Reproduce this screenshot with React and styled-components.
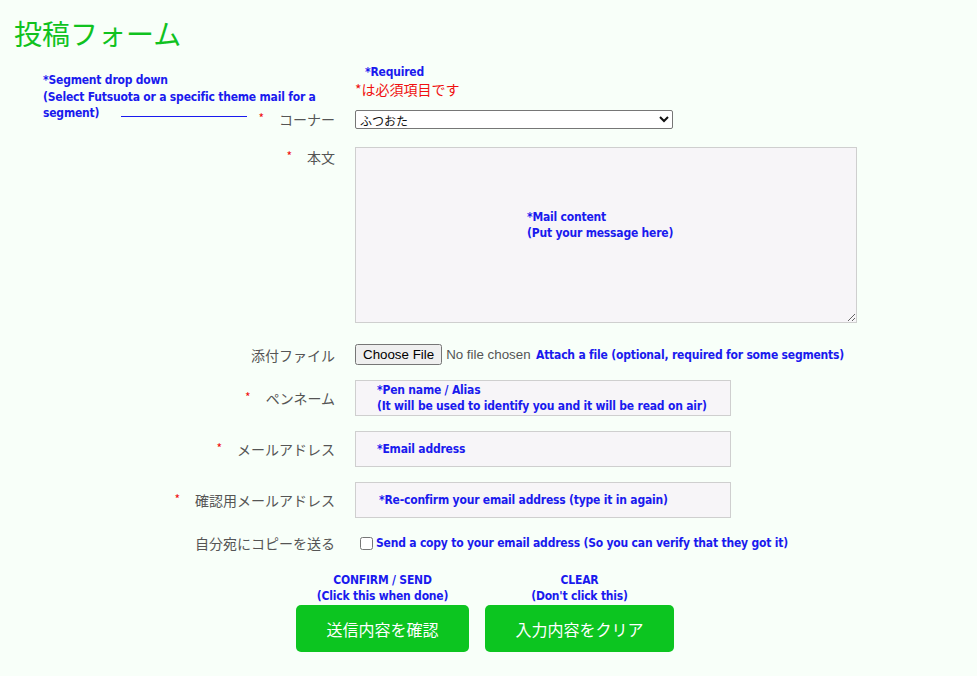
import React from 'react';
import styled, { createGlobalStyle } from 'styled-components';

const GlobalStyle = createGlobalStyle`
  html, body {
    margin: 0;
    background: #f8fff9;
  }
  body {
    font-family: "Noto Sans CJK JP", "Liberation Sans", sans-serif;
    color: #555;
  }
`;

const App = () => {
  return (
    <Page>
      <GlobalStyle />
      <Title>投稿フォーム</Title>

      <Form onSubmit={(e) => e.preventDefault()}>
        <SideNote>
          <NoteLine>*Segment drop down</NoteLine>
          <NoteLine>(Select Futsuota or a specific theme mail for a</NoteLine>
          <NoteLine>
            segment)
            <Leader />
          </NoteLine>
        </SideNote>

        <Row $mt={12}>
          <span />
          <Field>
            <Hint $indent={10}>*Required</Hint>
            <RequiredNote>*は必須項目です</RequiredNote>
          </Field>
        </Row>

        <Row $mt={11}>
          <Label required>コーナー</Label>
          <Field>
            <Select defaultValue="futsuota">
              <option value="futsuota">ふつおた</option>
            </Select>
          </Field>
        </Row>

        <Row $mt={18} $top>
          <Label required>本文</Label>
          <Field>
            <Box>
              <Textarea />
              <Overlay $left={172} $top={62}>
                *Mail content
                <br />
                (Put your message here)
              </Overlay>
            </Box>
          </Field>
        </Row>

        <Row $mt={21}>
          <Label>添付ファイル</Label>
          <Field $inline>
            <FileInput type="file" />
            <Hint>Attach a file (optional, required for some segments)</Hint>
          </Field>
        </Row>

        <Row $mt={15}>
          <Label required>ペンネーム</Label>
          <Field>
            <Box>
              <TextInput type="text" />
              <Overlay $left={22} $center>
                *Pen name / Alias
                <br />
                (It will be used to identify you and it will be read on air)
              </Overlay>
            </Box>
          </Field>
        </Row>

        <Row $mt={15}>
          <Label required>メールアドレス</Label>
          <Field>
            <Box>
              <TextInput type="email" />
              <Overlay $left={22} $center>
                *Email address
              </Overlay>
            </Box>
          </Field>
        </Row>

        <Row $mt={15}>
          <Label required>確認用メールアドレス</Label>
          <Field>
            <Box>
              <TextInput type="email" />
              <Overlay $left={24} $center>
                *Re-confirm your email address (type it in again)
              </Overlay>
            </Box>
          </Field>
        </Row>

        <Row $mt={15}>
          <Label>自分宛にコピーを送る</Label>
          <Field $inline>
            <Checkbox type="checkbox" id="copy" />
            <Hint as="label" htmlFor="copy">
              Send a copy to your email address (So you can verify that they
              got it)
            </Hint>
          </Field>
        </Row>

        <Buttons>
          <ButtonCol>
            <Hint $center>
              CONFIRM / SEND
              <br />
              (Click this when done)
            </Hint>
            <Button type="submit" $w={173}>
              送信内容を確認
            </Button>
          </ButtonCol>
          <ButtonCol>
            <Hint $center>
              CLEAR
              <br />
              (Don't click this)
            </Hint>
            <Button type="reset" $w={189}>
              入力内容をクリア
            </Button>
          </ButtonCol>
        </Buttons>
      </Form>
    </Page>
  );
};

const Label = ({ required, children }) => (
  <LabelCell>
    {required && <Star>*</Star>}
    {children}
  </LabelCell>
);

// Styled components
const Page = styled.div`
  width: 977px;
  min-height: 676px;
  padding-top: 14px;
  box-sizing: border-box;
`;

const Title = styled.h1`
  margin: 0 0 0 14px;
  height: 38px;
  font-size: 28px;
  font-weight: normal;
  line-height: 38px;
  color: #10c21f;
`;

const Form = styled.form`
  position: relative;
  display: flex;
  flex-direction: column;
`;

const Row = styled.div`
  display: grid;
  grid-template-columns: 335px 1fr;
  column-gap: 20px;
  align-items: ${(p) => (p.$top ? 'start' : 'center')};
  margin-top: ${(p) => p.$mt}px;
`;

const LabelCell = styled.div`
  display: flex;
  justify-content: flex-end;
  align-items: center;
  height: 20px;
  font-size: 14px;
  line-height: 20px;
  color: #555;
`;

const Star = styled.span`
  color: #f01010;
  font-size: 12px;
  line-height: 1;
  margin: 0 15px 3px 0;
`;

const Field = styled.div`
  display: ${(p) => (p.$inline ? 'flex' : 'block')};
  align-items: center;
`;

const narrow = `
  font-family: "DejaVu Sans Condensed", "DejaVu Sans", sans-serif;
  font-stretch: condensed;
  font-weight: bold;
  font-size: 12px;
  letter-spacing: -0.2px;
  color: #1a1aee;
`;

const Hint = styled.span`
  ${narrow}
  display: block;
  flex-shrink: 0;
  padding-left: ${(p) => p.$indent || 0}px;
  text-align: ${(p) => (p.$center ? 'center' : 'left')};
  line-height: 16px;
`;

const RequiredNote = styled.div`
  height: 18px;
  font-size: 14px;
  line-height: 18px;
  color: #f01010;
`;

const SideNote = styled.div`
  ${narrow}
  position: absolute;
  left: 43px;
  top: 20px;
  display: flex;
  flex-direction: column;
  align-items: flex-start;
  line-height: 16.5px;
`;

const NoteLine = styled.span`
  display: block;
  white-space: nowrap;
`;

const Leader = styled.span`
  display: inline-block;
  width: 126px;
  margin-left: 22px;
  border-bottom: 1px solid #1a1aee;
`;

const Select = styled.select`
  display: block;
  width: 318px;
  height: 19px;
  padding: 0;
  font-family: "Noto Sans CJK JP", sans-serif;
  font-size: 12px;
  color: #111;
  background: #fff;
  border: 1px solid #767676;
  border-radius: 2px;
`;

const Box = styled.div`
  position: relative;
  display: inline-block;
  vertical-align: top;
`;

const Textarea = styled.textarea`
  display: block;
  width: 502px;
  height: 176px;
  box-sizing: border-box;
  margin: 0;
  background: #f7f5f8;
  border: 1px solid #cfcfcf;
`;

const TextInput = styled.input`
  display: block;
  width: 376px;
  height: 36px;
  box-sizing: border-box;
  margin: 0;
  background: #f7f5f8;
  border: 1px solid #cfcfcf;
`;

const Overlay = styled.div`
  ${narrow}
  position: absolute;
  left: ${(p) => p.$left}px;
  top: ${(p) => (p.$center ? '0' : `${p.$top}px`)};
  bottom: ${(p) => (p.$center ? '0' : 'auto')};
  display: flex;
  flex-direction: column;
  justify-content: center;
  white-space: nowrap;
  pointer-events: none;
  line-height: 16px;
`;

const FileInput = styled.input`
  width: 176px;
  height: 21px;
  margin: 0 5px 0 0;
  font-family: "Liberation Sans", sans-serif;
  font-size: 13.333px;
  color: #555;
`;

const Checkbox = styled.input`
  margin: 0 3px 0 5px;
  width: 13px;
  height: 13px;
`;

const Buttons = styled.div`
  display: flex;
  gap: 16px;
  margin: 19px 0 0 296px;
`;

const ButtonCol = styled.div`
  display: flex;
  flex-direction: column;
  align-items: center;
  gap: 1px;
`;

const Button = styled.button`
  width: ${(p) => p.$w}px;
  height: 47px;
  border: none;
  border-radius: 5px;
  background: #0cc520;
  color: #fff;
  font-family: "Noto Sans CJK JP", sans-serif;
  font-size: 16px;
  cursor: pointer;
`;

export default App;
